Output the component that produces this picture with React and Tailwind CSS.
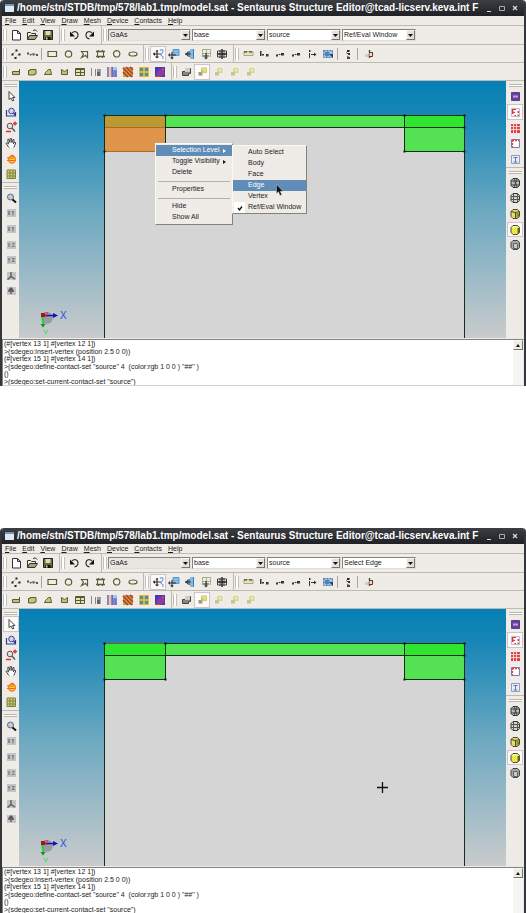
import clsx from 'clsx';

const MENUS = ['File', 'Edit', 'View', 'Draw', 'Mesh', 'Device', 'Contacts', 'Help'];

const LOG = [
  '(#[vertex 13 1] #[vertex 12 1])',
  '>(sdegeo:insert-vertex (position 2.5 0 0))',
  '(#[vertex 15 1] #[vertex 14 1])',
  '>(sdegeo:define-contact-set "source" 4  (color:rgb 1 0 0 ) "##" )',
  '()',
  '>(sdegeo:set-current-contact-set "source")',
];

const olive = '#c6c66a';
const dark = '#5a5a40';

// All glyphs live on a 16x16 grid
const GLYPHS = {
  new: <path d="M4.500 3.500h5l3 3v6.500h-8z M9.500 3.500v3h3" fill="#fff" stroke="#333" />,
  open: (
    <>
      <path d="M3.500 12.500v-7h3l1 1h4v2" fill="#f2f0d8" stroke="#333" />
      <path d="M3.500 12.500l2-4h8l-2.500 4z" fill="#a5a572" stroke="#333" />
      <path d="M9 4c1-1.500 3-1.500 4 .5" fill="none" stroke="#333" />
    </>
  ),
  save: (
    <>
      <path d="M3.500 3.500h9v9h-9z" fill="#6b6b2e" stroke="#222" />
      <path d="M5.500 4h5v4h-5z" fill="#d9d9c4" />
      <path d="M5.500 10h5v3h-5z" fill="#111" />
      <path d="M6 10.500h1.500v2H6z" fill="#ddd" />
    </>
  ),
  undo: (
    <>
      <path d="M6 6c2-2.500 6-1.500 6 2 0 2-1.500 3.500-3.500 3.800" fill="none" stroke="#333" strokeWidth="1.200" />
      <path d="M4 4.500v5h5z" fill="#111" />
    </>
  ),
  redo: (
    <>
      <path d="M10 6C8 3.500 4 4.500 4 8c0 2 1.500 3.500 3.500 3.800" fill="none" stroke="#333" strokeWidth="1.200" />
      <path d="M12 4.500v5H7z" fill="#111" />
    </>
  ),
  points: (
    <>
      <path d="M5 8l3-3M11 8l-3 3" stroke="#888" strokeDasharray="1 1" fill="none" />
      <path d="M7.500 3.500h2v2h-2zM3.500 7.500h2v2h-2zM10.500 7.500h2v2h-2zM6.500 11h2v2h-2z" fill="#222" />
    </>
  ),
  polyline: (
    <>
      <path d="M3 7.500l3 1 3-1 4 1" stroke="#aaa" fill="none" />
      <path d="M3 6.500h2v2H3zM6 8h1.500v1.500H6zM8.500 7.500h2v2h-2zM12 8h2v2h-2z" fill="#555" />
    </>
  ),
  rect: <path d="M4 5.500h8.500v5H4z" fill="#f2f0d8" stroke={dark} strokeWidth="1.200" />,
  circle: <circle cx="8.500" cy="8" r="3.200" fill="#f2f0d8" stroke={dark} strokeWidth="1.200" />,
  polygon: <path d="M5.500 5.500h6v6l-2-2-4 2 2-3.500z" fill="#f2f0d8" stroke={dark} strokeWidth="1.200" />,
  frame: (
    <>
      <path d="M5.500 5.500h6v5h-6z" fill="#f2f0d8" stroke={dark} />
      <path d="M4 5.500h9M4 10.500h9M6.500 4v2M10.500 4v2M6.500 10v2M10.500 10v2" fill="none" stroke={dark} strokeWidth="1.300" />
    </>
  ),
  arc: <path d="M9 11a3.200 3.200 0 1 1 2.800-2.500l-1 2z" fill="#f2f0d8" stroke={dark} strokeWidth="1.200" />,
  ellipse: <ellipse cx="9" cy="8" rx="4" ry="2" fill="#f2f0d8" stroke={dark} strokeWidth="1.200" />,
  snapFree: (
    <>
      <path d="M3 8h8M7 4v8" stroke="#333" strokeWidth="1.200" />
      <path d="M3 8l2-2v4zM7 12.500l-2-2h4zM7 4L5.500 5.500h3z" fill="#333" />
      <path d="M10 4.500c2-2 4 0 2.500 2S10 9 12 10s1 2 1 3" stroke="#6d9fd6" fill="none" strokeWidth="1.200" />
    </>
  ),
  snapFace: (
    <>
      <path d="M7 3.500h6v6H7z" fill="#7dbcea" stroke="#5b97c6" />
      <path d="M3 9h7M6 6v6" stroke="#333" strokeWidth="1.200" />
      <path d="M2 9l2-2v4zM6 13.500l-2-2h4z" fill="#333" />
    </>
  ),
  snapEdge: (
    <>
      <path d="M8 3h4v10H8z" fill="#7dbcea" />
      <path d="M11.500 3v10" stroke="#3f79ae" />
      <path d="M3 8h6M7 5v6" stroke="#333" strokeWidth="1.200" />
      <path d="M3 8l3-2.500v5z" fill="#345" />
    </>
  ),
  snapGrid: (
    <>
      <path d="M4 3.500h9M4 7.500h9M4.500 3v8M8.500 3v8M12.500 3v8" stroke="#a9ad8a" />
      <path d="M5 10h6M8 7v5" stroke="#333" strokeWidth="1.200" />
      <path d="M8 13.500l-2-2h4z" fill="#333" />
    </>
  ),
  snapAll: (
    <>
      <path d="M3.500 5h9v6h-9zM6 4v8M10 4v8" stroke="#444" fill="none" />
      <path d="M3 8h10M8 3v10" stroke="#222" strokeWidth="1.400" />
    </>
  ),
  ruler: (
    <>
      <path d="M4 5.500h9v4H4z" fill="#e6e4b4" stroke="#a9a97c" />
      <path d="M4 6h3M9 6h3" stroke="#333" strokeWidth="1.200" />
    </>
  ),
  dimA: <path d="M4 5h1.500v5H4zM6 8h2v1.500H6zM10 8h2.500v2.500H10z" fill="#333" />,
  dimB: <path d="M4 8.500h2v2H4zM6.500 8h2v1h-2zM9 7h3v2.500H9z" fill="#333" />,
  dimC: <path d="M5 4h1.500v2H5zM5 7h1v5H5zM7 8h3v1H7zM10 6.500l2.500 2-2.500 2z" fill="#333" />,
  region: (
    <>
      <path d="M3.500 4.500h9v7h-9z" fill="#9cc0e4" stroke="#4b78aa" strokeDasharray="2 1" />
      <circle cx="7" cy="8" r="2.500" fill="#4f82c0" />
      <path d="M9 8h4v4z" fill="#345" />
    </>
  ),
  stack: (
    <>
      <path d="M7 4h2.500v2H7zM8 7h2v2H8z" fill="#222" />
      <path d="M7 11h3v2H7z" fill="#6b3030" />
      <path d="M6 6.500l3 2M7 10l3 2" stroke="#555" />
    </>
  ),
  contact: (
    <>
      <path d="M5 9.500h4" stroke="#ccc" strokeWidth="3" />
      <path d="M9.500 4v8" stroke="#5a2f22" strokeWidth="1.300" />
      <path d="M9.500 6.500h3v4h-3" stroke="#5a2f22" fill="#f3e0d8" />
    </>
  ),
  solidA: (
    <>
      <path d="M4.500 7.500h7v3h-7z" fill={olive} stroke={dark} />
      <path d="M11.500 5v3" stroke={dark} />
    </>
  ),
  solidB: <path d="M4.500 11v-4.500h1.500v-1h6V10h-1.500v1z" fill={olive} stroke={dark} />,
  solidC: <path d="M4.500 10.500l1-2 3-3h2l1 5z" fill={olive} stroke={dark} />,
  solidD: <path d="M5.500 5.500l3 2 3-2v5h-6z" fill={olive} stroke={dark} />,
  table: (
    <>
      <path d="M3.500 4.500h9v7h-9z" fill="#e4e4a4" stroke={dark} />
      <path d="M3.500 5.500h9M3.500 8.500h9M8.500 5v7" stroke={dark} />
    </>
  ),
  fade: (
    <>
      <path d="M3.500 4v8M7.500 5v7" stroke="#888" />
      <path d="M9 5h3.500v7H9z" fill="#666" />
      <path d="M9 5h3.500v3H9z" fill="#999" />
    </>
  ),
  bars: (
    <>
      <path d="M3 3h10v10H3z" fill="#8d7fd6" />
      <path d="M5 3h2v10H5z" fill="#f0cf8a" />
      <path d="M8 3h1v10H8zM11 7h1v6h-1z" fill="#5a74cc" />
      <path d="M9 3h4v3H9z" fill="#9ccbe8" />
    </>
  ),
  diagonal: (
    <>
      <path d="M3 3h10v10H3z" fill="#d89a3f" />
      <path d="M3 4l9 9M6 3l7 7M3 8l5 5M10 3l3 3" stroke="#a5402f" strokeWidth="1.500" />
    </>
  ),
  mosaic: (
    <>
      <path d="M3 3h10v10H3z" fill="#e5b93c" />
      <path d="M4 4h3v3H4zM9 9h3v3H9z" fill="#3f9a80" />
      <path d="M9 4h3v3H9zM4 9h3v3H4z" fill="#4a82c7" />
    </>
  ),
  profile: (
    <>
      <path d="M3 3h10v10H3z" fill="#4c3cb0" />
      <path d="M4 11l3-5 4-2 2 5-4 4z" fill="#8e3c9c" />
      <path d="M3 12h5v1H3zM10 4h2v2h-2z" fill="#d1434f" />
    </>
  ),
  unite: (
    <>
      <path d="M7.500 4.500h5v5h-2v2h-6v-4h3z" fill="#8c8488" stroke="#444" />
      <path d="M7 4h5v4H7z" fill="#d0cbc8" />
    </>
  ),
  order: (
    <>
      <path d="M7.500 4h5v4.500h-5z" fill="#e6e07a" stroke="#cfc874" />
      <path d="M4.500 8h4v3.500h-4z" fill="#9c9879" />
      <path d="M7 6.500h2.500V9H7z" fill="#cdc352" />
    </>
  ),
  orderDim: (
    <>
      <path d="M7.500 4.500h4.500v4H7.500z" fill="#ebe6a6" stroke="#d8d190" />
      <path d="M5 8h4v3.500H5z" fill="#c5beae" />
      <path d="M7 7h2.500v2.500H7z" fill="#d9ce68" />
    </>
  ),
  arrow: <path d="M6 3.500v8l2-1.500 1.500 3 1.300-.6L9.500 9.500H12z" fill="#fff" stroke="#444" />,
  zoomWin: (
    <>
      <path d="M3.500 6v6h9V8" fill="#e4e8fa" stroke="#34348a" strokeWidth="1.200" />
      <circle cx="8.500" cy="7" r="2.800" fill="#cfd6f0" stroke="#44448f" />
      <path d="M10.500 9l2 2.500" stroke="#34348a" strokeWidth="1.300" />
    </>
  ),
  zoomPan: (
    <>
      <circle cx="7" cy="7" r="2.800" fill="#e9dfdf" stroke="#555" />
      <path d="M9 9l3 3.500" stroke="#555" strokeWidth="1.400" />
      <path d="M10 4.500h4M12 2.500v4M3 12.500h5" stroke="#e22b3a" strokeWidth="1.500" />
    </>
  ),
  hand: (
    <path
      d="M6 12.500L3 8.500l1-.8 1.500 1.300-.8-4.500 1.200-.3 1 3.300.3-4 1.200.1.500 4 1.300-3.300 1 .5-.8 4 1.600-1.800.8.8-2 4.700"
      fill="#fff"
      stroke="#333"
      strokeWidth=".9"
    />
  ),
  spin: (
    <>
      <ellipse cx="9" cy="8.500" rx="3.500" ry="3.500" fill="#fbd12c" stroke="#f0802a" strokeWidth="1.300" />
      <path d="M4 7h7M4 9.500h8M8 4l3 1" stroke="#ee6a1f" strokeWidth="1.200" />
    </>
  ),
  grid: (
    <>
      <path d="M4 4h8.500v8.500H4z" fill="#e0d84c" stroke="#7a7a5a" />
      <path d="M4 7h8.500M4 10h8.500M7 4v8.500M10 4v8.500" stroke="#7a7a5a" />
    </>
  ),
  magnify: (
    <>
      <circle cx="7.500" cy="7" r="3" fill="#b8cfe2" stroke="#666" />
      <path d="M9.500 9.500l3.500 3" stroke="#111" strokeWidth="2" />
    </>
  ),
  xy: <path d="M5 10l2-4M5 6l2 4M9 6l1 2 1-2M10 8v2.500" stroke="#77797d" fill="none" />,
  xz: <path d="M5 6l2 4M7 6l-2 4M9 6.500h2.500L9 9.500h3" stroke="#85878a" fill="none" />,
  yz: <path d="M5 6l1 2 1.500-2M6 8v2.500M9 6.500h2.500L9 9.500h3" stroke="#77797d" fill="none" />,
  iso: <path d="M8 4v4.500l-3.500 3M8 8.500l4 2.500" stroke="#555" fill="none" strokeWidth="1.300" />,
  normal: <path d="M8 5v6M5 8h6M6 7l2-2 2 2" stroke="#555" fill="none" strokeWidth="1.300" />,
  layers: (
    <>
      <path d="M4.500 4.500h8v8h-8z" fill="#6a3fa0" stroke="#54447a" />
      <path d="M6 8.500h5" stroke="#b9a3ea" strokeWidth="2" />
    </>
  ),
  meshA: (
    <>
      <path d="M4.500 4.500h8v8h-8z" fill="#fff" stroke="#c9b5bd" />
      <path d="M5 5h1.500v5H5zM6.500 5H9v1H6.500zM6.500 8H8v1H6.500zM10.500 7H12v2h-1.500zM10.500 10.500H12V12h-1.500zM7.500 11H9v1H7.500z" fill="#e23a46" />
    </>
  ),
  meshB: (
    <>
      <path d="M4 4h9v9H4z" fill="#de4450" />
      <path d="M4 6.500h9M4 9.500h9M6.500 4v9M9.500 4v9" stroke="#fcc" />
    </>
  ),
  axes: (
    <>
      <path d="M4.500 4.500h8v8h-8z" fill="#fff" stroke="#7a7ab8" />
      <path d="M5 5.500h7M5.500 5v7" stroke="#e0404c" strokeWidth="1.300" strokeDasharray="2 1" />
    </>
  ),
  section: (
    <>
      <path d="M4.500 4.500h8v8h-8z" fill="#e9effa" stroke="#8d9dbe" />
      <path d="M6.500 6.500h4M8.500 7v4M6.500 11h4" stroke="#66799e" />
    </>
  ),
  hexWire: (
    <>
      <path d="M6 3.500h4.500l2 2v5l-2 2H6l-2-2v-5z" fill="#b6b6b6" stroke="#333" />
      <path d="M4 6h8M4 10h8M7 4l3 8M10 4L7 12" stroke="#444" />
    </>
  ),
  hexHidden: (
    <>
      <path d="M6 3.500h4.500l2 2v5l-2 2H6l-2-2v-5z" fill="#d6d6d2" stroke="#333" />
      <path d="M4 6.500h8.500M4 9.500h8.500M6.500 4v8M10.500 4v8" stroke="#555" />
    </>
  ),
  hexShadeEdge: (
    <>
      <path d="M6 3.500h4.500l2 2v5l-2 2H6l-2-2v-5z" fill="#e2de6c" stroke="#4a4a2c" />
      <path d="M8.500 6v6M4 5.500l4.500 1 4-1" stroke="#4a4a2c" fill="none" />
      <path d="M9.500 7H12v4l-2.500 1z" fill="#8a8640" />
    </>
  ),
  hexShade: (
    <>
      <path d="M6 3.500h4.500l2 2v5l-2 2H6l-2-2v-5z" fill="#ebe84e" stroke="#4a4a2c" />
      <path d="M10.500 6H12.500v5l-2 1z" fill="#6b682c" />
      <path d="M6 4.500h4.500l1 1H5z" fill="#fafac8" />
    </>
  ),
  hexFlat: (
    <>
      <path d="M6 3.500h4.500l2 2v5l-2 2H6l-2-2v-5z" fill="#a6a6a6" stroke="#444" />
      <path d="M6.500 6.500h4v5h-4z" fill="#c8c8c8" stroke="#666" />
    </>
  ),
};

const DISABLED = ['xy', 'xz', 'yz', 'iso', 'normal'];

function ToolButton({ name, active }) {
  return (
    <button
      type="button"
      aria-label={name}
      className={clsx('flex h-4 min-h-0 w-4 items-center justify-center', active && 'border border-[#cfc3cb] bg-[#fbfaf9]')}
    >
      <svg viewBox="0 0 16 16" className="size-4 shrink-0">
        {DISABLED.includes(name) && <path d="M4 4h9v8H4z" fill="#c3c4c6" />}
        {GLYPHS[name]}
      </svg>
    </button>
  );
}

function Toolbar({ children, last }) {
  return (
    <div className={clsx('flex h-full items-center pr-[3px] pl-px', !last && 'border-r border-[#bdb9b3]')}>
      <span className="mr-px h-3 w-1 border-x border-[#c3bfb9] bg-white" />
      {children}
    </div>
  );
}

function Tools({ names, active }) {
  return names.map((n, i) => <ToolButton key={i} name={n} active={n === active} />);
}

function Divider() {
  return <span className="mx-px h-3 w-[2px] border-l border-[#aaa69f]" />;
}

function Combo({ label, value, className }) {
  return (
    <label className={clsx('relative block h-3 border border-[#85817b] border-r-[#e0ddd8] border-b-[#e0ddd8]', className)}>
      <select aria-label={label} defaultValue={value} className="block h-[10px] w-full appearance-none pl-px text-[7px] leading-[10px] outline-none">
        <option>{value}</option>
      </select>
      <span className="pointer-events-none absolute inset-y-0 right-0 flex w-[9px] items-center justify-center border border-[#f8f7f5] border-r-[#77736d] border-b-[#77736d] bg-[#e4e1dc]">
        <svg viewBox="0 0 5 3" className="h-[3px] w-[5px] shrink-0"><path d="M0 0h5L2.500 3z" fill="#111" /></svg>
      </span>
    </label>
  );
}

function SideGroup({ names, active, className }) {
  return (
    <div className={clsx('flex flex-col items-center pt-[3px]', className)}>
      <span className="mb-px h-[3px] w-[13px] shrink-0 border-y border-[#b9b5ae] bg-white" />
      <div className="flex min-h-0 w-full flex-1 flex-col items-center">
        <Tools names={names} active={active} />
      </div>
    </div>
  );
}

function Model({ highlighted, id }) {
  return (
    <svg viewBox="0 0 487 257" className="block h-auto w-full">
      <defs>
        <linearGradient id={id} x1="0" y1="0" x2="0" y2="1">
          <stop offset="0" stopColor="#0680b5" />
          <stop offset=".12" stopColor="#1585b6" />
          <stop offset=".5" stopColor="#6ba8c1" />
          <stop offset="1" stopColor="#c9cbcc" />
        </linearGradient>
      </defs>
      <rect width="487" height="257" fill={`url(#${id})`} />
      <rect x="86" y="34" width="360" height="223" fill="#d5d5d5" />
      <rect x="86" y="34" width="360" height="13" fill="#54e354" />
      <rect x="386" y="34" width="60" height="37" fill="#54e154" />
      <rect x="386" y="34" width="60" height="13" fill="#30e530" />
      <rect x="86" y="34" width="60" height="37" fill={highlighted ? '#e0954d' : '#54e154'} />
      <rect x="86" y="34" width="60" height="13" fill={highlighted ? '#bd9a31' : '#30e530'} />
      <g stroke="#14301a" fill="none">
        <path d="M85.500 257V34.500H445.500V257M385.500 34v36.500h60M146.500 34v36.500" />
        <path d={highlighted ? 'M146 46.500h300' : 'M86 46.500h360M86 70.500h60'} />
        {highlighted && <path d="M86 46.500h60M86 70.500h60" stroke="#a96d28" />}
        {!highlighted && <path d="M87 34.500h58" stroke="#8a5a20" />}
      </g>
      <path
        d="M84.500 33.500h2v2h-2zM145.500 33.500h2v2h-2zM384.500 33.500h2v2h-2zM444.500 33.500h2v2h-2zM444.500 45.500h2v2h-2zM84.500 69.500h2v2h-2zM145.500 69.500h2v2h-2zM384.500 69.500h2v2h-2zM444.500 69.500h2v2h-2z"
        fill="#111"
      />
      <circle cx="28" cy="237" r="6" fill="#888d90" opacity=".7" />
      <path d="M24 234.500h11" stroke="#1414c8" strokeWidth="1.500" />
      <path d="M34 232l5 2.500-5 2.500z" fill="#1414a0" />
      <path d="M24 235v9" stroke="#1fd83a" strokeWidth="2" />
      <path d="M21.500 243h5L24 246.500z" fill="#1b8a2a" />
      <path d="M22 232h4v4h-4z" fill="#a01818" />
      <text x="25" y="236" fill="#e03030" className="font-['Liberation_Sans'] text-[8px]">Z</text>
      <text x="41" y="238" fill="#2a50d8" className="font-['Liberation_Sans'] text-[10px]">X</text>
      <text x="24" y="254" fill="#2fe04a" className="font-['Liberation_Sans'] text-[8px]">Y</text>
      {!highlighted && <path d="M358 178.500h11M363.500 173v11" stroke="#111" strokeWidth="1.300" />}
    </svg>
  );
}

const panel = 'absolute border border-[#f9f8f6] border-r-[#85817b] border-b-[#85817b] bg-[#efece8]';

function MenuItem({ children, active, arrow, checked, className }) {
  return (
    <button
      type="button"
      className={clsx('relative flex h-[11px] w-full items-center text-left whitespace-nowrap', active && 'bg-[#5f8db8] text-white', className)}
    >
      {checked && (
        <span className="absolute inset-y-0 left-px flex w-[11px] items-center justify-center bg-white">
          <svg viewBox="0 0 8 8" className="size-2"><path d="M2 4l1.500 2L6 2.500" fill="none" stroke="#111" strokeWidth="1.300" /></svg>
        </span>
      )}
      {children}
      {arrow && (
        <svg viewBox="0 0 4 4" className="absolute inset-y-0 right-[5px] my-auto size-1"><path d="M0 0l3 2-3 2z" fill="currentColor" /></svg>
      )}
    </button>
  );
}

function MenuLine() {
  return <hr className="mx-[2px] mt-[3px] mb-[2px] border-[#b5b1aa]" />;
}

function ContextMenu() {
  return (
    <>
      <div className={clsx(panel, 'top-[62px] left-[136px] w-[78px] py-px')}>
        <MenuItem active arrow className="pl-4">Selection Level</MenuItem>
        <MenuItem arrow className="pl-4">Toggle Visibility</MenuItem>
        <MenuItem className="pl-4">Delete</MenuItem>
        <MenuLine />
        <MenuItem className="pl-4">Properties</MenuItem>
        <MenuLine />
        <MenuItem className="pl-4">Hide</MenuItem>
        <MenuItem className="pl-4">Show All</MenuItem>
      </div>
      <div className={clsx(panel, 'top-[64px] left-[213px] w-[75px] pt-px')}>
        <MenuItem className="pl-[15px]">Auto Select</MenuItem>
        <MenuItem className="pl-[15px]">Body</MenuItem>
        <MenuItem className="pl-[15px]">Face</MenuItem>
        <MenuItem active className="pl-[15px]">Edge</MenuItem>
        <MenuItem className="pl-[15px]">Vertex</MenuItem>
        <MenuItem checked className="pl-[15px]">Ref/Eval Window</MenuItem>
      </div>
      <svg viewBox="0 0 8 12" className="absolute top-[103px] left-[257px] h-3 w-2">
        <path d="M.5.500v9l2-1.700 1.500 3.700 1.700-.8-1.500-3.400h2.800z" fill="#111" stroke="#ddd" strokeWidth=".4" />
      </svg>
    </>
  );
}

function EditorWindow({ id, level, menuOpen }) {
  return (
    <section className="flex flex-col overflow-hidden rounded-t-sm border-x-2 border-[#33363a] bg-[#efece8]">
      <header className="flex h-4 items-center bg-linear-to-b from-[#3b3e43] to-[#1f2124] pr-1 pl-[3px] text-white">
        <svg viewBox="0 0 9 8" className="mr-[3px] h-2 w-[9px] shrink-0">
          <path d="M0 0h9v8H0z" fill="#dfe8ee" />
          <path d="M0 0h9v2H0z" fill="#6f97b8" />
        </svg>
        <h1 className="flex-1 text-[10px] leading-4 font-bold whitespace-nowrap">
          /home/stn/STDB/tmp/578/lab1.tmp/model.sat - Sentaurus Structure Editor@tcad-licserv.keva.int F
        </h1>
        <div className="flex shrink-0 items-center gap-[3px]">
          <button type="button" aria-label="Minimize" className="flex size-[10px] items-center justify-center">
            <svg viewBox="0 0 10 10" className="size-[10px]"><path d="M3 8.500h4" stroke="#ddd" /></svg>
          </button>
          <button type="button" aria-label="Maximize" className="flex size-[10px] items-center justify-center">
            <svg viewBox="0 0 10 10" className="size-[10px]"><path d="M2.500 3.500h5v4h-5z" fill="none" stroke="#aaa" /></svg>
          </button>
          <button type="button" aria-label="Close" className="flex size-[10px] items-center justify-center">
            <svg viewBox="0 0 10 10" className="size-[10px]"><path d="M3 3l4 4M7 3L3 7" stroke="#ddd" strokeWidth="1.200" /></svg>
          </button>
        </div>
      </header>

      <nav className="flex h-[10px] items-center gap-1.5 border-b border-[#bdb9b3] pl-[3px]">
        {MENUS.map((m) => (
          <button key={m} type="button" className="leading-[9px]">
            <span className="underline">{m[0]}</span>{m.slice(1)}
          </button>
        ))}
      </nav>

      <div className="flex h-[19px] items-center border-b border-[#bdb9b3]">
        <Toolbar><Tools names={['new', 'open', 'save']} /></Toolbar>
        <Toolbar><Tools names={['undo', 'redo']} /></Toolbar>
        <Toolbar last>
          <div className="flex gap-px">
            <Combo label="Material" value="GaAs" className="w-[83px] bg-[#e9e6e2]" />
            <Combo label="Body" value="base" className="w-[74px] bg-white" />
            <Combo label="Contact" value="source" className="w-[74px] bg-white" />
            <Combo label="Selection level" value={level} className="w-[74px] bg-white" />
          </div>
        </Toolbar>
      </div>

      <div className="flex h-[18px] items-center border-b border-[#bdb9b3]">
        <Toolbar>
          <Tools names={['points', 'polyline']} />
          <Divider />
          <Tools names={['rect', 'circle', 'polygon', 'frame', 'arc', 'ellipse']} />
        </Toolbar>
        <Toolbar>
          <Tools names={['snapFree', 'snapFace', 'snapEdge', 'snapGrid', 'snapAll']} active="snapFree" />
        </Toolbar>
        <Toolbar last>
          <Tools names={['ruler', 'dimA', 'dimB', 'dimB', 'dimC', 'region']} />
          <Divider />
          <Tools names={['stack']} />
          <Divider />
          <Tools names={['contact']} />
        </Toolbar>
      </div>

      <div className="flex h-[18px] items-center border-b border-[#bdb9b3]">
        <Toolbar>
          <Tools names={['solidA', 'solidB', 'solidC', 'solidD', 'table', 'fade', 'bars', 'diagonal', 'mosaic', 'profile']} />
        </Toolbar>
        <Toolbar last>
          <Tools names={['unite', 'order', 'orderDim', 'orderDim', 'orderDim']} active="order" />
        </Toolbar>
      </div>

      <main className="flex">
        <aside className="w-[17px] shrink-0">
          <SideGroup
            names={['arrow', 'zoomWin', 'zoomPan', 'hand', 'spin', 'grid']}
            active={menuOpen ? undefined : 'arrow'}
            className="h-[102px] border-b border-[#bdb9b3]"
          />
          <SideGroup names={['magnify', 'xy', 'xy', 'xz', 'yz', 'iso', 'normal']} className="h-[116px]" />
        </aside>
        <div className="relative min-w-0 flex-1">
          <Model id={id} highlighted={menuOpen} />
          {menuOpen && <ContextMenu />}
        </div>
        <aside className="w-[18px] shrink-0">
          <SideGroup names={['layers', 'meshA', 'meshB', 'axes', 'section']} active="meshA" className="h-[87px] border-b border-[#bdb9b3]" />
          <SideGroup names={['hexWire', 'hexHidden', 'hexShadeEdge', 'hexShade', 'hexFlat']} active="hexShade" className="h-[85px]" />
        </aside>
      </main>

      <div className="mt-px flex h-[47px] border border-[#85817b] border-r-[#efece8] border-b-[#d5d2cd] bg-white">
        <div className="flex min-w-0 flex-1 flex-col justify-between overflow-hidden pl-px leading-[7px] whitespace-pre">
          {LOG.map((line) => <p key={line}>{line}</p>)}
        </div>
        <div className="w-[10px] shrink-0 bg-[#f6f5f3]">
          <button type="button" aria-label="Scroll up" className="flex h-[10px] w-full items-center justify-center border border-[#f9f8f6] border-r-[#77736d] border-b-[#77736d] bg-[#efece8]">
            <svg viewBox="0 0 4 3" className="h-[3px] w-1"><path d="M0 3h4L2 0z" fill="#111" /></svg>
          </button>
        </div>
      </div>
    </section>
  );
}

export default function App() {
  return (
    <div className="flex flex-col gap-[142px] bg-white font-['Liberation_Sans',sans-serif] text-[7px] text-[#1a1a1a]">
      <EditorWindow id="sky-top" level="Ref/Eval Window" menuOpen />
      <EditorWindow id="sky-bottom" level="Select Edge" />
    </div>
  );
}
